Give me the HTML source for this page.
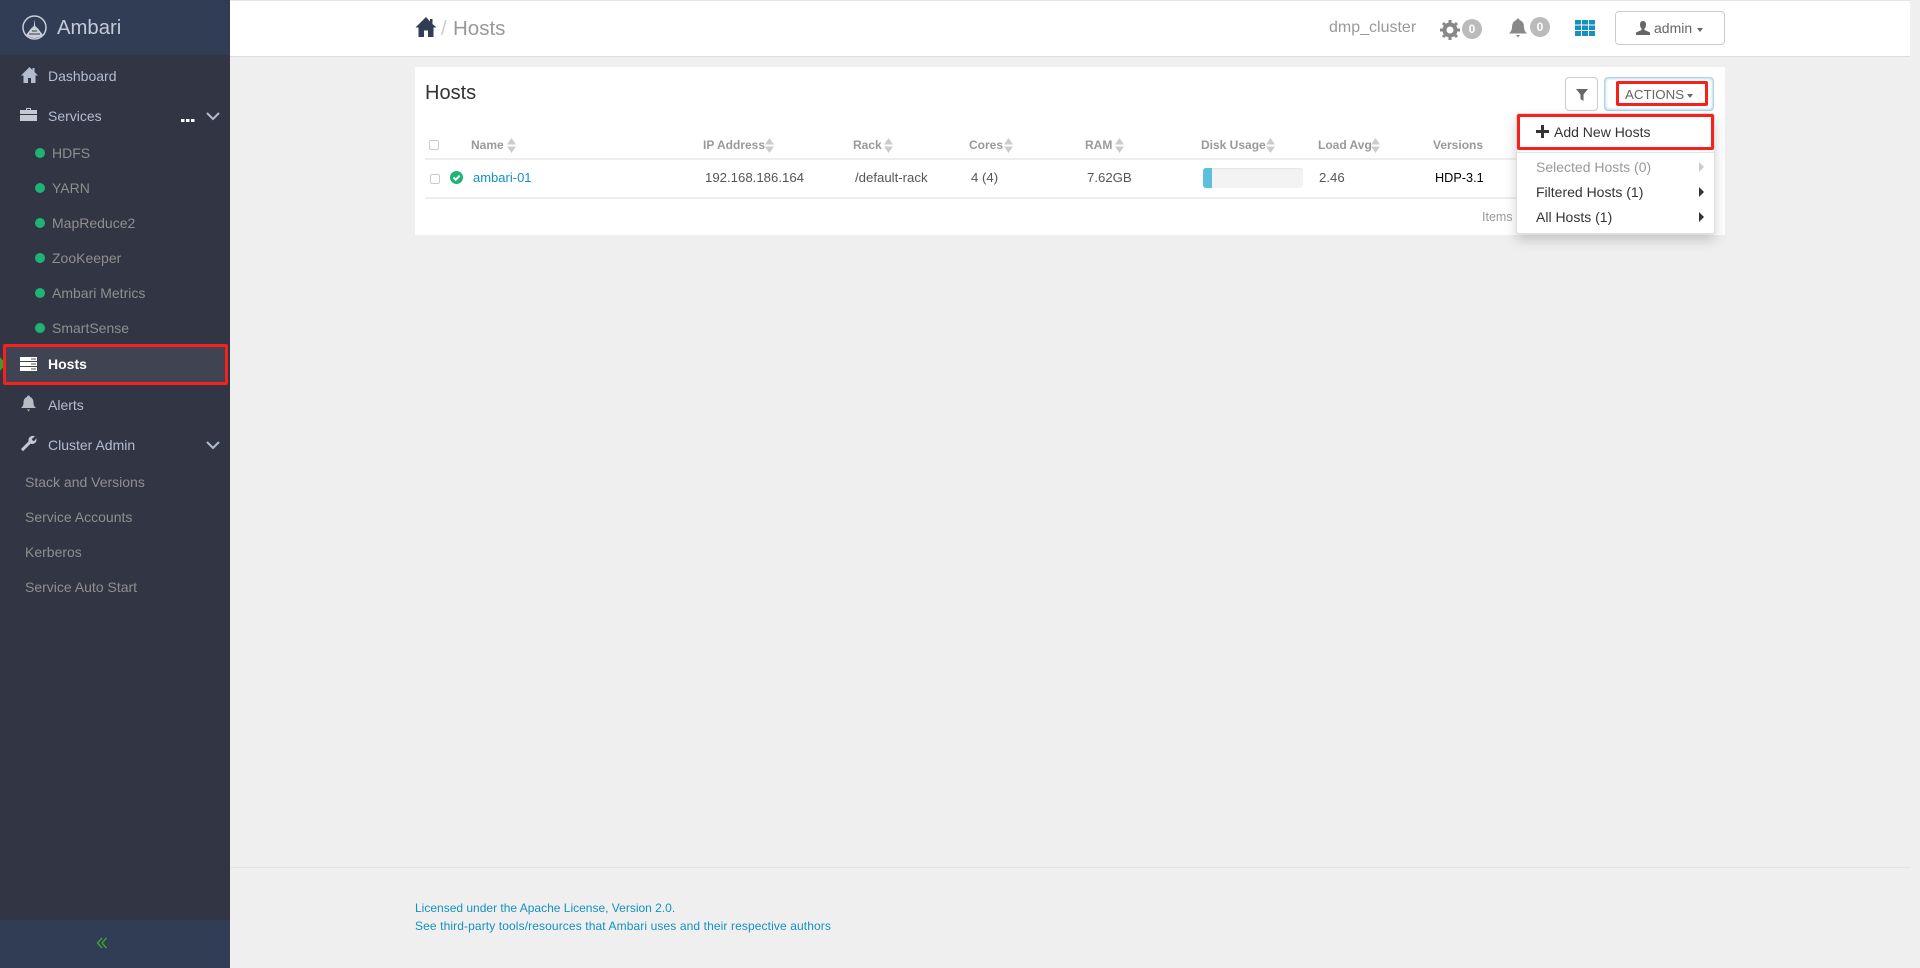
<!DOCTYPE html>
<html><head><meta charset="utf-8"><title>Ambari - Hosts</title>
<style>
html,body{margin:0;padding:0;width:1920px;height:968px;overflow:hidden;background:#efefef;font-family:"Liberation Sans",sans-serif;}
.a{position:absolute;display:block;}
.t{position:absolute;white-space:nowrap;line-height:20px;height:20px;}
.m{font-size:14px;color:#b3bdd0;}
.s{font-size:14px;color:#8f8f8f;}
.d{position:absolute;left:35px;width:10px;height:10px;border-radius:50%;background:#1eb475;}
.h{font-size:12px;font-weight:bold;color:#999;top:135px;}
.r{font-size:13.2px;color:#555;top:168px;}
.i{font-size:14px;color:#333;}
svg{position:absolute;display:block;}
</style></head><body>
<!-- topbar -->
<div class="a" style="left:230px;top:0;width:1680px;height:57px;background:#fff;border-bottom:1px solid #ddd;border-top:1px solid #e4e4e4;box-sizing:border-box"></div>
<!-- sidebar -->
<div class="a" style="left:0;top:0;width:230px;height:968px;background:#323544"></div>
<div class="a" style="left:0;top:0;width:230px;height:55px;background:#313d54"></div>
<div class="a" style="left:0;top:920px;width:230px;height:48px;background:#313d54"></div>
<svg style="left:22px;top:15px" width="25" height="25" viewBox="0 0 25 25"><circle cx="12.5" cy="12.5" r="11.5" fill="none" stroke="#c9ced8" stroke-width="1.5"/><path d="M12.5 4L13.2 11L16 13.5L21 20Q12.5 26 4 20L9 13.5L11.8 11Z" fill="#c9ced8"/><path d="M7 19h11M10 16h5" stroke="#313d54"/></svg>
<div class="t" style="left:57px;top:18px;font-size:20.3px;color:#c3cad8">Ambari</div>
<svg style="left:20px;top:66px" width="19" height="18" viewBox="0 0 19 18"><path d="M9.5 1L1 9.5h2.5V17h4.500v-5h3v5h4.500V9.500H18L14.500 6V2h-2v2Z" fill="#b3bdd0"/></svg>
<div class="t m" style="left:48px;top:66px">Dashboard</div>
<svg style="left:20px;top:107px" width="17" height="15" viewBox="0 0 17 15"><path d="M6 3V1h5v2h6v4H0V3ZM7 3h3V2H7ZM0 8h17v6H0Z" fill="#c4c9d4"/></svg>
<div class="t m" style="left:48px;top:106px">Services</div>
<div class="a" style="left:181px;top:119px;width:14px;height:3px;background:repeating-linear-gradient(90deg,#fff 0 3.500px,transparent 3.500px 5px)"></div>
<svg style="left:206px;top:111px" width="14" height="10" viewBox="0 0 14 10"><path d="M1 2l6 6 6-6" fill="none" stroke="#b3bdd0" stroke-width="2"/></svg>
<div class="d" style="top:148px"></div><div class="t s" style="left:52px;top:143px">HDFS</div>
<div class="d" style="top:183px"></div><div class="t s" style="left:52px;top:178px">YARN</div>
<div class="d" style="top:218px"></div><div class="t s" style="left:52px;top:213px">MapReduce2</div>
<div class="d" style="top:253px"></div><div class="t s" style="left:52px;top:248px">ZooKeeper</div>
<div class="d" style="top:288px"></div><div class="t s" style="left:52px;top:283px">Ambari Metrics</div>
<div class="d" style="top:323px"></div><div class="t s" style="left:52px;top:318px">SmartSense</div>
<div class="a" style="left:0;top:357px;width:0;height:0;border-left:6px solid #3c9e28;border-top:7px solid transparent;border-bottom:7px solid transparent"></div>
<div class="a" style="left:3px;top:344px;width:225px;height:41px;box-sizing:border-box;background:#404351;border:3px solid #f5211a;border-radius:2px"></div>
<svg style="left:20px;top:357px" width="17" height="14" viewBox="0 0 17 14"><path d="M0 0h17v4H0ZM0 5h17v4H0ZM0 10h17v4H0Z" fill="#fff"/><path d="M11 2h5M11 7h5M11 12h5" stroke="#555" stroke-width="1"/></svg>
<div class="t" style="left:48px;top:354px;font-size:14px;font-weight:bold;color:#fff">Hosts</div>
<svg style="left:21px;top:395px" width="15" height="17" viewBox="0 0 15 17"><path d="M7.500 0.500Q9 .5 9 2Q12.500 3 12.500 8Q12.500 11 15 13H0Q2.500 11 2.500 8Q2.500 3 6 2Q6 .5 7.500 .5ZM6 14.500h3L7.500 16.500Z" fill="#b8bcc6"/></svg>
<div class="t m" style="left:48px;top:395px">Alerts</div>
<svg style="left:20px;top:435px" width="17" height="17" viewBox="0 0 17 17"><path d="M1 14L8.500 6.500Q8 3 10.500 1.500Q12.500.5 15 1.200L11.800 4L12.500 5.500L14.200 6L16.500 3.200Q17 6 15 8Q13 9.500 10.500 8.800L3 16.300Z" fill="#c4c9d4"/></svg>
<div class="t m" style="left:48px;top:435px">Cluster Admin</div>
<svg style="left:206px;top:440px" width="14" height="10" viewBox="0 0 14 10"><path d="M1 2l6 6 6-6" fill="none" stroke="#b3bdd0" stroke-width="2"/></svg>
<div class="t s" style="left:25px;top:472px">Stack and Versions</div>
<div class="t s" style="left:25px;top:507px">Service Accounts</div>
<div class="t s" style="left:25px;top:542px">Kerberos</div>
<div class="t s" style="left:25px;top:577px">Service Auto Start</div>
<svg style="left:96px;top:937px" width="12" height="12" viewBox="0 0 12 12"><path d="M6 1L1.500 6L6 11M10.500 1L6 6L10.500 11" fill="none" stroke="#3aa535" stroke-width="1.400"/></svg>
<!-- breadcrumb -->
<svg style="left:415px;top:16px" width="22" height="21" viewBox="0 0 22 21"><path d="M11 1L0.500 11.500h3V21h5.500v-6.500h4V21h5.500V11.500h3L17.500 8V3h-2.500v2.500Z" fill="#313d54"/></svg>
<div class="t" style="left:441px;top:19px;font-size:20px;color:#ccc">/</div>
<div class="t" style="left:453px;top:19px;font-size:20.5px;color:#999">Hosts</div>
<!-- top right -->
<div class="t" style="left:1329px;top:18px;font-size:16px;color:#999">dmp_cluster</div>
<svg style="left:1440px;top:20px" width="20" height="20" viewBox="0 0 20 20"><circle cx="10" cy="10" r="5.500" fill="none" stroke="#888" stroke-width="4"/><path d="M10 0v20M0 10h20M3 3l14 14M17 3L3 17" stroke="#888" stroke-width="3"/><circle cx="10" cy="10" r="3.500" fill="#fff"/></svg>
<div class="a" style="left:1462px;top:19px;width:20px;height:20px;border-radius:50%;background:#bbb;color:#fff;font-size:12px;font-weight:bold;text-align:center;line-height:20px">0</div>
<svg style="left:1509px;top:18px" width="18" height="20" viewBox="0 0 18 20"><path d="M9 0.500Q10.500.5 10.500 2Q15 3.500 15 9Q15 13 18 15.500H0Q3 13 3 9Q3 3.500 7.500 2Q7.500.5 9 .5ZM7 17h4L9 19.500Z" fill="#888"/></svg>
<div class="a" style="left:1530px;top:17px;width:20px;height:20px;border-radius:50%;background:#bbb;color:#fff;font-size:12px;font-weight:bold;text-align:center;line-height:20px">0</div>
<svg style="left:1575px;top:20px" width="20" height="16" viewBox="0 0 20 16"><path d="M0 0h6v4.500H0ZM7 0h6v4.500H7ZM14 0h6v4.500h-6ZM0 5.500h6V10H0ZM7 5.500h6V10H7ZM14 5.500h6V10h-6ZM0 11h6v5H0ZM7 11h6v5H7ZM14 11h6v5h-6Z" fill="#1491c1"/></svg>
<div class="a" style="left:1615px;top:11px;width:110px;height:34px;box-sizing:border-box;border:1px solid #ccc;border-radius:4px;background:#fff"></div>
<svg style="left:1636px;top:21px" width="14" height="14" viewBox="0 0 14 14"><path d="M7 0Q10 0 10 3.500Q10 6 8.500 7.500V9L14 11.500V14H0V11.500L5.500 9V7.500Q4 6 4 3.500Q4 0 7 0Z" fill="#666"/></svg>
<div class="t" style="left:1654px;top:18px;font-size:14px;color:#666">admin</div>
<div class="a" style="left:1697px;top:28px;width:0;height:0;border-top:4px solid #666;border-left:3.500px solid transparent;border-right:3.500px solid transparent"></div>
<!-- panel -->
<div class="a" style="left:415px;top:67px;width:1310px;height:168px;background:#fff"></div>
<div class="t" style="left:425px;top:83px;font-size:20px;color:#333">Hosts</div>
<div class="a" style="left:1565px;top:77px;width:33px;height:34px;box-sizing:border-box;border:1px solid #ccc;border-radius:4px;background:#fff"></div>
<svg style="left:1576px;top:89px" width="12" height="12" viewBox="0 0 12 12"><path d="M0 0h12L7.500 5.500V12L4.500 10V5.500Z" fill="#666"/></svg>
<div class="a" style="left:1604px;top:77px;width:110px;height:34px;box-sizing:border-box;border:1px solid #a9d3e6;border-radius:4px;background:#fff;box-shadow:inset 0 0 3px #8fc4dc"></div>
<div class="a" style="left:1616px;top:81px;width:92px;height:25px;box-sizing:border-box;border:3px solid #f5211a;border-radius:2px"></div>
<div class="t" style="left:1625px;top:85px;font-size:13.3px;color:#666">ACTIONS</div>
<div class="a" style="left:1687px;top:94px;width:0;height:0;border-top:4px solid #666;border-left:3.500px solid transparent;border-right:3.500px solid transparent"></div>
<!-- table -->
<div class="a" style="left:429px;top:140px;width:10px;height:10px;box-sizing:border-box;border:1px solid #ccc;border-radius:2px"></div>
<div class="t h" style="left:471px">Name</div>
<div class="t h" style="left:703px">IP Address</div>
<div class="t h" style="left:853px">Rack</div>
<div class="t h" style="left:969px">Cores</div>
<div class="t h" style="left:1085px">RAM</div>
<div class="t h" style="left:1201px">Disk Usage</div>
<div class="t h" style="left:1318px">Load Avg</div>
<div class="t h" style="left:1433px">Versions</div>
<svg style="left:507px;top:138px" width="9" height="15" viewBox="0 0 9 15"><path d="M4.500 0L9 6.500H0ZM0 8.500h9L4.500 15Z" fill="#ccc"/></svg>
<svg style="left:765px;top:138px" width="9" height="15" viewBox="0 0 9 15"><path d="M4.500 0L9 6.500H0ZM0 8.500h9L4.500 15Z" fill="#ccc"/></svg>
<svg style="left:884px;top:138px" width="9" height="15" viewBox="0 0 9 15"><path d="M4.500 0L9 6.500H0ZM0 8.500h9L4.500 15Z" fill="#ccc"/></svg>
<svg style="left:1004px;top:138px" width="9" height="15" viewBox="0 0 9 15"><path d="M4.500 0L9 6.500H0ZM0 8.500h9L4.500 15Z" fill="#ccc"/></svg>
<svg style="left:1115px;top:138px" width="9" height="15" viewBox="0 0 9 15"><path d="M4.500 0L9 6.500H0ZM0 8.500h9L4.500 15Z" fill="#ccc"/></svg>
<svg style="left:1266px;top:138px" width="9" height="15" viewBox="0 0 9 15"><path d="M4.500 0L9 6.500H0ZM0 8.500h9L4.500 15Z" fill="#ccc"/></svg>
<svg style="left:1371px;top:138px" width="9" height="15" viewBox="0 0 9 15"><path d="M4.500 0L9 6.500H0ZM0 8.500h9L4.500 15Z" fill="#ccc"/></svg>
<div class="a" style="left:425px;top:158px;width:1290px;height:2px;background:#eee"></div>
<div class="a" style="left:430px;top:174px;width:10px;height:10px;box-sizing:border-box;border:1px solid #ccc;border-radius:2px"></div>
<svg style="left:450px;top:171px" width="13" height="13" viewBox="0 0 13 13"><circle cx="6.500" cy="6.500" r="6.500" fill="#1eb475"/><path d="M3.500 6.500l2.200 2.200 4-4" fill="none" stroke="#fff" stroke-width="2"/></svg>
<div class="t" style="left:473px;top:168px;font-size:13px;color:#1491c1">ambari-01</div>
<div class="t r" style="left:705px">192.168.186.164</div>
<div class="t r" style="left:855px">/default-rack</div>
<div class="t r" style="left:971px">4 (4)</div>
<div class="t r" style="left:1087px">7.62GB</div>
<div class="a" style="left:1203px;top:168px;width:100px;height:20px;border-radius:3px;background:#f3f3f3;box-shadow:inset 0 1px 1px #e6e6e6;overflow:hidden"><div style="width:9px;height:20px;background:#5bc0de"></div></div>
<div class="t r" style="left:1319px">2.46</div>
<div class="t" style="left:1435px;top:168px;font-size:12.7px;color:#000">HDP-3.1</div>
<div class="a" style="left:425px;top:197px;width:1290px;height:2px;background:#eee"></div>
<div class="t" style="left:1482px;top:207px;font-size:12.500px;color:#999">Items</div>
<!-- dropdown -->
<div class="a" style="left:1516px;top:113px;width:199px;height:121px;box-sizing:border-box;background:#fff;border:1px solid #ddd;border-radius:3px;box-shadow:0 6px 12px rgba(0,0,0,.18)"></div>
<div class="a" style="left:1517px;top:114px;width:197px;height:36px;box-sizing:border-box;border:3px solid #f5211a;border-radius:2px;background:#fff"></div>
<div class="a" style="left:1517px;top:152px;width:197px;height:1px;background:#e5e5e5"></div>
<svg style="left:1536px;top:125px" width="13" height="13" viewBox="0 0 13 13"><path d="M5 0h3v5h5v3H8v5H5V8H0V5h5Z" fill="#333"/></svg>
<div class="t i" style="left:1554px;top:122px">Add New Hosts</div>
<div class="t i" style="left:1536px;top:157px;color:#999">Selected Hosts (0)</div>
<div class="t i" style="left:1536px;top:182px">Filtered Hosts (1)</div>
<div class="t i" style="left:1536px;top:207px">All Hosts (1)</div>
<div class="a" style="left:1699px;top:162px;width:0;height:0;border-left:5px solid #ccc;border-top:5px solid transparent;border-bottom:5px solid transparent"></div>
<div class="a" style="left:1699px;top:187px;width:0;height:0;border-left:5px solid #333;border-top:5px solid transparent;border-bottom:5px solid transparent"></div>
<div class="a" style="left:1699px;top:212px;width:0;height:0;border-left:5px solid #333;border-top:5px solid transparent;border-bottom:5px solid transparent"></div>
<!-- footer -->
<div class="a" style="left:230px;top:867px;width:1680px;height:1px;background:#e3e3e3"></div>
<div class="t" style="left:415px;top:898px;font-size:12px;color:#1491c1">Licensed under the Apache License, Version 2.0.</div>
<div class="t" style="left:415px;top:916px;font-size:12px;letter-spacing:.11px;color:#1491c1">See third-party tools/resources that Ambari uses and their respective authors</div>
</body></html>
